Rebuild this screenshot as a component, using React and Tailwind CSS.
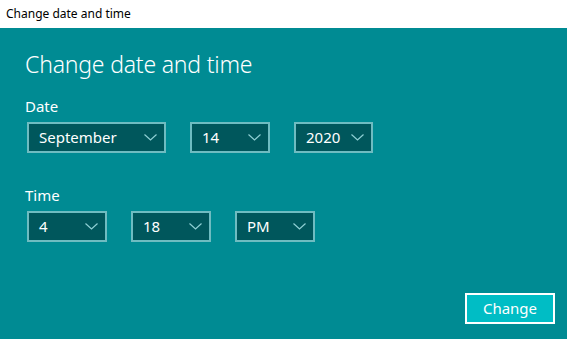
import React from 'react';

const Chevron = () => (
    <svg width="13" height="7" viewBox="0 0 13 7" fill="none" className="shrink-0">
        <path d="M0.5 0.5 L6.5 6 L12.5 0.5" stroke="#8fd0d4" strokeWidth="1.2" />
    </svg>
);

const Select = ({ value, width }) => (
    <div className={`${width} h-[31px] flex items-center justify-between pl-[10px] pr-[7px] bg-[#00575c] border-2 border-[#6fbcc1] text-white text-[15px]`}>
        <span>{value}</span>
        <Chevron />
    </div>
);

const App = () => {
    return (
        <div className="w-[567px] h-[339px] flex flex-col overflow-hidden" style={{ fontFamily: '"Noto Sans", "Open Sans", sans-serif' }}>
            <div className="h-[28px] bg-white flex items-center px-[6px] text-[12px] text-black">
                Change date and time
            </div>
            <div className="flex-1 bg-[#008b93] px-[25px] pt-[19px] flex flex-col">
                <h1 className="text-[23px] font-light text-white leading-[34px] tracking-[-0.2px]">Change date and time</h1>
                <div className="mt-[15px] text-[15px] text-white leading-[20px]">Date</div>
                <div className="mt-[6px] flex gap-[24px] ml-[2px]">
                    <Select value="September" width="w-[139px]" />
                    <Select value="14" width="w-[80px]" />
                    <Select value="2020" width="w-[79px]" />
                </div>
                <div className="mt-[32px] text-[15px] text-white leading-[20px]">Time</div>
                <div className="mt-[6px] flex gap-[24px] ml-[2px]">
                    <Select value="4" width="w-[80px]" />
                    <Select value="18" width="w-[80px]" />
                    <Select value="PM" width="w-[80px]" />
                </div>
                <div className="flex justify-end mt-[51px] -mr-[13px]">
                    <button className="w-[90px] h-[31px] bg-[#00bdc5] border-2 border-white text-white text-[15px] flex items-center justify-center">
                        Change
                    </button>
                </div>
            </div>
        </div>
    );
};

export default App;
